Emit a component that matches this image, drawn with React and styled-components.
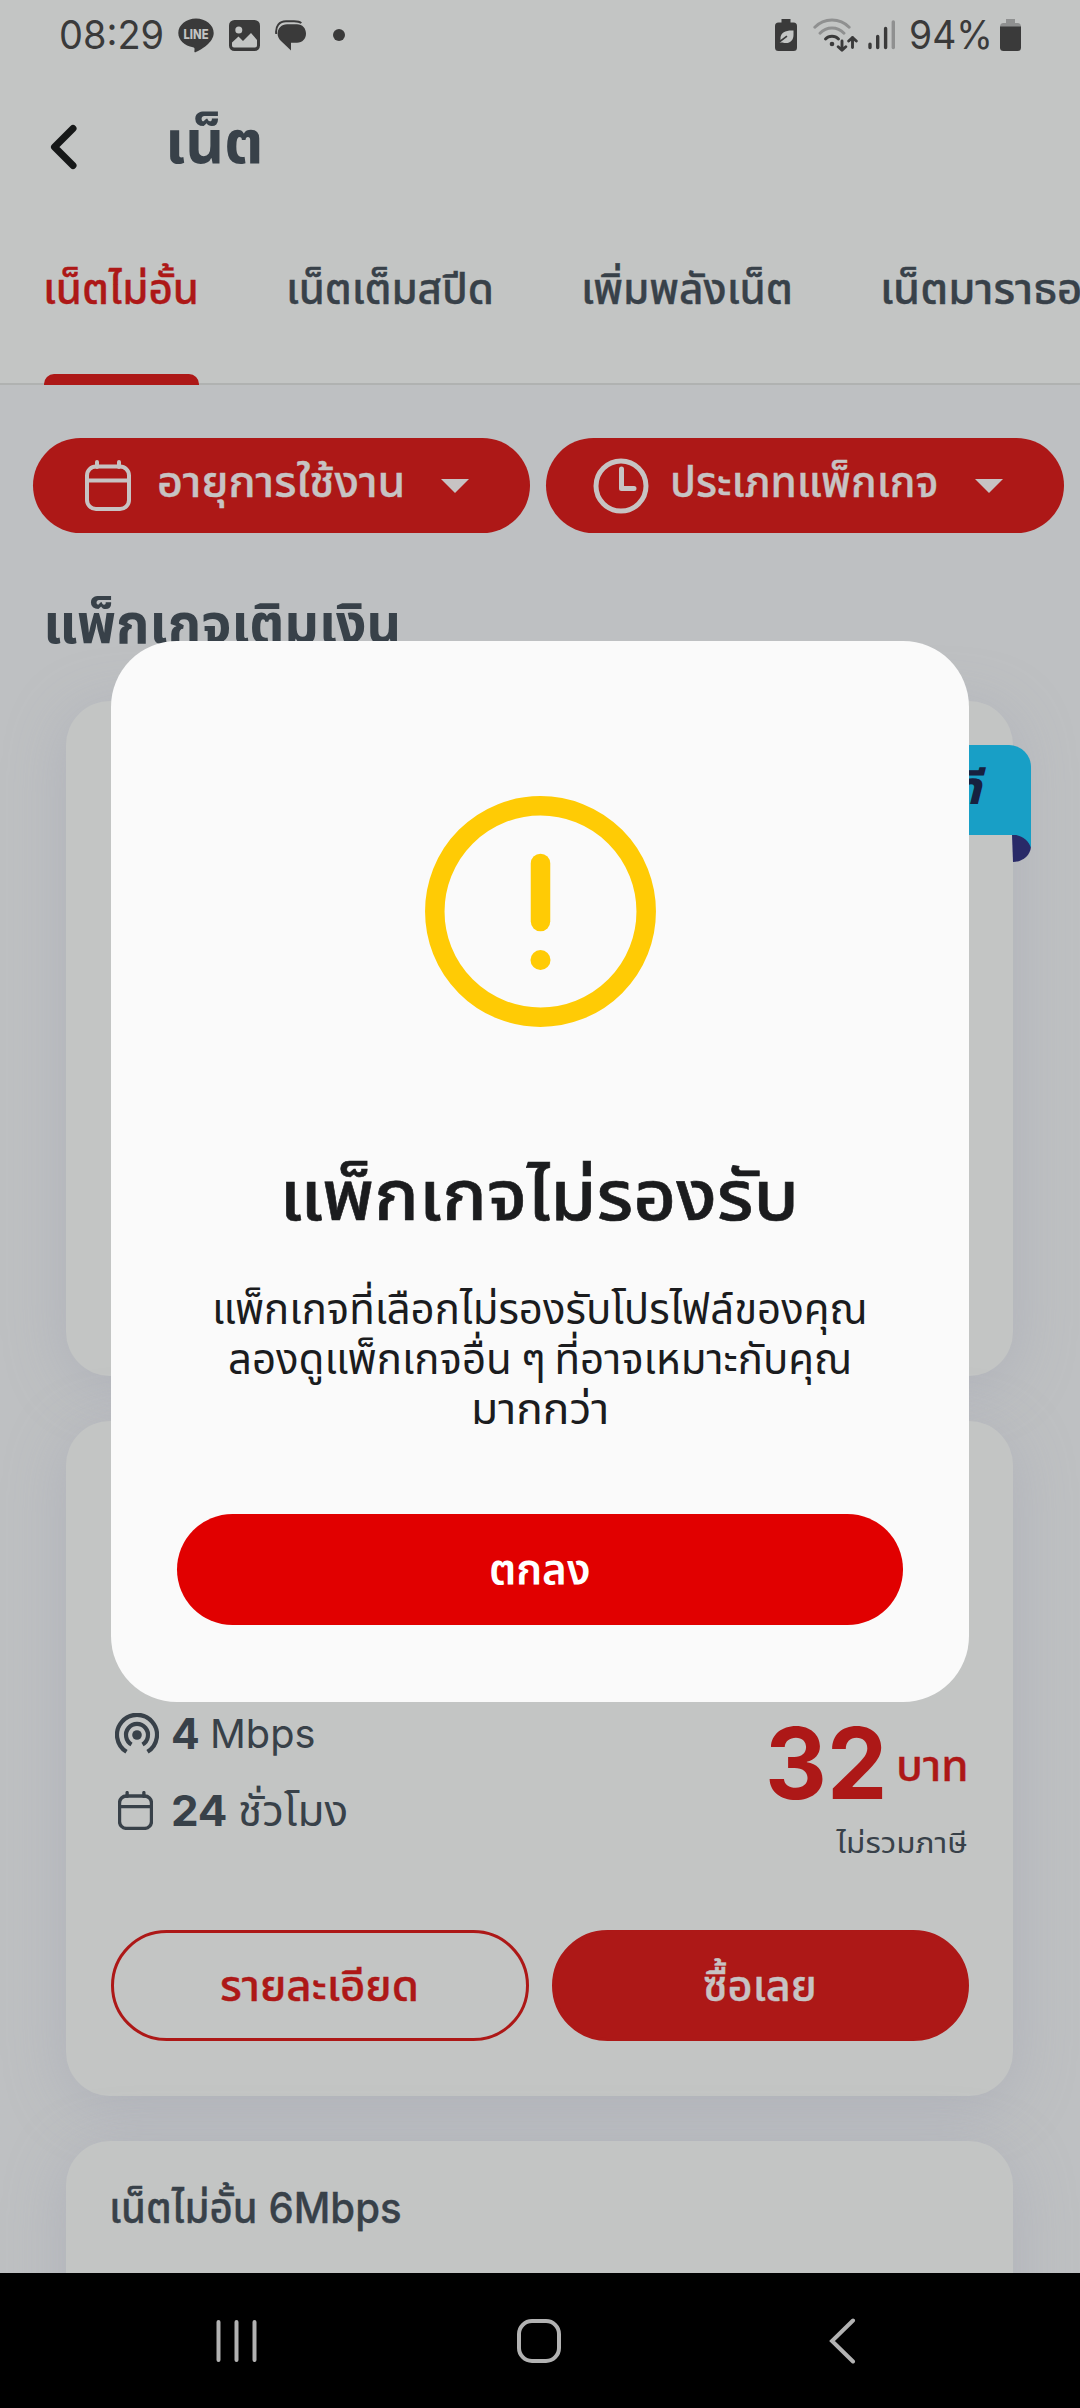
import React, { useLayoutEffect, useRef, useState } from 'react'
import styled, { createGlobalStyle } from 'styled-components';

// keeps the ink of a line at a fixed width whatever Thai font is installed
function FitText({ width, size, children, ...rest }) {
  const ref = useRef(null);
  const [scale, setScale] = useState(1);

  useLayoutEffect(() => {
    setScale((width + size * 0.08) / ref.current.offsetWidth);
  }, [width, size, children]);

  return (
    <TextBox $width={width} size={size} {...rest}>
      <TextLine ref={ref} style={{ transform: `translateX(${-size * 0.05}px) scaleX(${scale})` }}>{children}</TextLine>
    </TextBox>
  )
}

function CalendarIcon({ width, height, stroke }) {
  return (
    <svg width={width} height={height} viewBox="0 0 46 51" fill="none" stroke="currentColor" strokeWidth={stroke} strokeLinecap="round">
      <rect x="2" y="6.5" width="42" height="42.5" rx="9" />
      <path d="M2 20.5H44M12 2V7M34 2V7" />
    </svg>
  )
}

function ClockIcon() {
  return (
    <svg width="56" height="56" viewBox="0 0 56 56" fill="none" stroke="currentColor" strokeWidth="5" strokeLinecap="round" strokeLinejoin="round">
      <circle cx="28" cy="28" r="25" />
      <path d="M28.5 11V30.5H41" />
    </svg>
  )
}

function SignalIcon() {
  return (
    <svg width="44" height="41" viewBox="0 0 44 41" fill="none" stroke="currentColor" strokeWidth="4.2">
      <path d="M11.500 38.800A20 20 0 1 1 32.500 38.800" />
      <path d="M16.500 31.500A11 11 0 1 1 27.500 31.500" />
      <circle cx="22" cy="22" r="4.8" fill="currentColor" stroke="none" />
    </svg>
  )
}

function StatusIcons() {
  return (
    <StatusLeft>
      <FitText width={102} size={39} weight={380}>08:29</FitText>
      <svg width="36" height="35" viewBox="0 0 36 35" fill="#3a3a3a">
        <path d="M18 .5C8.2 .5 .3 7 .3 15c0 7.2 6.3 13 14.7 14.3 2 .4 1.6 1.5 1.4 3.6-.1 1 .3 1.8 1.6 1.2C23 31.8 35.7 24.5 35.7 15 35.7 7 27.8 .5 18 .5z" />
        <text x="5.5" y="20.5" fontFamily="Inter, sans-serif" fontSize="12.5" fontWeight="800" textLength="25" lengthAdjust="spacingAndGlyphs" fill="#c3c5c4">LINE</text>
      </svg>
      <svg width="31" height="31" viewBox="0 0 31 31">
        <rect width="31" height="31" rx="5.5" fill="#3a3a3a" />
        <circle cx="9.8" cy="10" r="3.5" fill="#c3c5c4" />
        <path d="M3 22.5L9.5 16.5 14 21 22 13 28 20V25.5Q28 27.5 26 27.5H5Q3 27.5 3 25.5z" fill="#c3c5c4" />
      </svg>
      <svg width="31" height="31" viewBox="0 0 31 31" fill="#3a3a3a">
        <path d="M12 4.2H22C27.5 4.2 31 8.3 31 13.5S27.5 22.8 22 22.8H16V30.5L6 21C3.5 18.8 2.6 16 2.6 13.5 2.6 8.3 6.5 4.2 12 4.2z" />
        <path d="M1.2 14C.2 6 4.5 1.2 11 1.2H19C22.5 1.2 25 1.8 26.3 3.2" fill="none" stroke="#3a3a3a" strokeWidth="1.9" />
      </svg>
      <Dot />
    </StatusLeft>
  )
}

function StatusSystem() {
  return (
    <StatusRight>
      <svg width="22" height="32" viewBox="0 0 22 32">
        <path d="M6.5 0H15.5V3.5H18.5Q22 3.5 22 7V28.5Q22 32 18.5 32H3.5Q0 32 0 28.5V7Q0 3.5 3.5 3.5H6.5z" fill="#3a3a3a" />
        <path d="M18.5 11.5C11 11 6 13.5 5.5 18.5V22L11.5 17.5 4 23.5H7.5C14 25.5 18.5 22 18.5 16z" fill="#c3c5c4" />
        <path d="M3.5 23.5L12 17.2" stroke="#3a3a3a" strokeWidth="1.6" />
      </svg>
      <svg width="45" height="34" viewBox="0 0 45 34" fill="none" strokeWidth="2.9" strokeLinecap="round" strokeLinejoin="round">
        <path d="M1.8 9.3C11-.5 27-.5 36.2 9.3M7 15.3C13.5 8.3 24.5 8.3 31 15.3" stroke="#8f9090" />
        <path d="M12.5 21C16 17.3 22 17.3 25.5 21" stroke="#3a3a3a" />
        <circle cx="19" cy="26" r="2.3" fill="#3a3a3a" stroke="none" />
        <path d="M29 23V32.3M25.2 28.8L29 32.3 32.8 28.8M39.5 29.5V19.5M35.7 23L39.5 19.5 43.3 23" stroke="#3a3a3a" />
      </svg>
      <svg width="28" height="30" viewBox="0 0 28 30" strokeWidth="3.4" strokeLinecap="round">
        <path d="M2 24.3V27.5M9.7 16.5V27.5M17.6 8.5V27.5" stroke="#3a3a3a" />
        <path d="M25.3 2V27.5" stroke="#8f9090" />
      </svg>
      <FitText width={81} size={39} weight={380}>94%</FitText>
      <svg width="21" height="32" viewBox="0 0 21 32">
        <path d="M6 0H15V4H17.5Q21 4 21 8H0Q0 4 3.5 4H6z" fill="#8f9090" />
        <path d="M0 7.5H21V28.5Q21 32 17.5 32H3.5Q0 32 0 28.5z" fill="#3a3a3a" />
      </svg>
    </StatusRight>
  )
}

function FilterButton({ icon, width, textWidth, children, ...rest }) {
  return (
    <Filter $width={width} {...rest}>
      {icon}
      <FitText width={textWidth} size={42} weight={500} lift={4}>{children}</FitText>
      <Caret />
    </Filter>
  )
}

function CardActions() {
  return (
    <Actions>
      <ActionButton $outline>
        <FitText width={196} size={42} weight={500}>รายละเอียด</FitText>
      </ActionButton>
      <ActionButton>
        <FitText width={111} size={42} weight={500}>ซื้อเลย</FitText>
      </ActionButton>
    </Actions>
  )
}

function WarningDialog() {
  return (
    <Backdrop>
      <Dialog>
        <svg width="231" height="231" viewBox="0 0 231 231" fill="none" stroke="#ffcb05" strokeWidth="19.5">
          <circle cx="115.5" cy="115.5" r="105.7" />
          <path d="M115.5 67.5V125.5" strokeLinecap="round" />
          <circle cx="115.5" cy="164" r="10" fill="#ffcb05" stroke="none" />
        </svg>
        <DialogTitle>
          <FitText width={514} size={69} weight={500} line={90}>แพ็กเกจไม่รองรับ</FitText>
        </DialogTitle>
        <DialogBody>
          <FitText width={652} size={42} line={50}>แพ็กเกจที่เลือกไม่รองรับโปรไฟล์ของคุณ</FitText>
          <FitText width={621} size={42} line={50}>ลองดูแพ็กเกจอื่น ๆ ที่อาจเหมาะกับคุณ</FitText>
          <FitText width={135} size={42} line={50}>มากกว่า</FitText>
        </DialogBody>
        <ConfirmButton>
          <FitText width={98} size={42} weight={600} lift={1}>ตกลง</FitText>
        </ConfirmButton>
      </Dialog>
    </Backdrop>
  )
}

function App() {
  return (
    <Screen>
      <GlobalStyle />
      <Header>
        <StatusBar>
          <StatusIcons />
          <StatusSystem />
        </StatusBar>
        <AppBar>
          <svg width="28" height="46" viewBox="0 0 28 46" fill="none" stroke="#161818" strokeWidth="7" strokeLinecap="round" strokeLinejoin="round">
            <path d="M23 4.5L4.5 23 23 41.5" />
          </svg>
          <FitText width={94} size={61} weight={700} lift={6}>เน็ต</FitText>
        </AppBar>
        <Tabs>
          <Tab $active><FitText width={153} size={42} weight={500}>เน็ตไม่อั้น</FitText></Tab>
          <Tab><FitText width={205} size={42} weight={500}>เน็ตเต็มสปีด</FitText></Tab>
          <Tab><FitText width={209} size={42} weight={500}>เพิ่มพลังเน็ต</FitText></Tab>
          <Tab><FitText width={226} size={42} weight={500}>เน็ตมาราธอน</FitText></Tab>
        </Tabs>
      </Header>
      <Content>
        <Filters>
          <FilterButton width={497} textWidth={245} icon={<CalendarIcon width={46} height={51} stroke={4} />}>อายุการใช้งาน</FilterButton>
          <FilterButton width={518} textWidth={265} icon={<ClockIcon />}>ประเภทแพ็กเกจ</FilterButton>
        </Filters>
        <SectionTitle>
          <FitText width={354} size={55} weight={700} line={70}>แพ็กเกจเติมเงิน</FitText>
        </SectionTitle>
        <CardList>
          <Card>
            <Ribbon>
              <RibbonText>ดี</RibbonText>
            </Ribbon>
            <RibbonFold viewBox="0 0 24 40">
              <path d="M-1 12H5C14 13 18 18 18 24 17 33 9 39 0 39z" fill="#292a68" />
              <path d="M-7 11C6 11 15 15 18 25V8H-7z" fill="#189fc6" />
            </RibbonFold>
            <CardActions />
          </Card>
          <Card>
            <PackageInfo>
              <div>
                <SpecRow>
                  <SpecIcon $left={4}><SignalIcon /></SpecIcon>
                  <FitText width={25} size={42} weight={700} line={77}>4</FitText>
                  <FitText width={102} size={40} line={77}>Mbps</FitText>
                </SpecRow>
                <SpecRow>
                  <SpecIcon $left={7}><CalendarIcon width={35} height={39} stroke={4.4} /></SpecIcon>
                  <FitText width={53} size={42} weight={700} line={77}>24</FitText>
                  <FitText width={107} size={42} line={77}>ชั่วโมง</FitText>
                </SpecRow>
              </div>
              <PriceColumn>
                <Price>
                  <FitText width={114} size={99} weight={700} line={100}>32</FitText>
                  <PriceUnit>
                    <FitText width={69} size={42} weight={500} line={50}>บาท</FitText>
                  </PriceUnit>
                </Price>
                <TaxNote>
                  <FitText width={129} size={29} line={40}>ไม่รวมภาษี</FitText>
                </TaxNote>
              </PriceColumn>
            </PackageInfo>
            <CardActions />
          </Card>
          <Card $open>
            <FitText width={289} size={42} weight={500} line={60}>เน็ตไม่อั้น 6Mbps</FitText>
          </Card>
        </CardList>
      </Content>
      <WarningDialog />
      <NavBar>
        <svg width="42" height="44" viewBox="0 0 42 44" stroke="#b2b2b2" strokeWidth="4" strokeLinecap="round">
          <path d="M2.5 3V41M20.5 3V41M38.5 3V41" />
        </svg>
        <svg width="44" height="44" viewBox="0 0 44 44" fill="none" stroke="#b2b2b2" strokeWidth="4">
          <rect x="2" y="2" width="40" height="40" rx="13" />
        </svg>
        <svg width="27" height="46" viewBox="0 0 27 46" fill="none" stroke="#b2b2b2" strokeWidth="4" strokeLinecap="round">
          <path d="M24 2.5L3 23 24 43.5" />
        </svg>
      </NavBar>
    </Screen>
  )
}
export default App


const GlobalStyle = createGlobalStyle`
  body {
    margin: 0;
    background: #000;
  }

  svg {
    display: block;
    flex-shrink: 0;
  }
`;

const Screen = styled.div`
  position: relative;
  display: flex;
  flex-direction: column;
  width: 1080px;
  height: 2408px;
  overflow: hidden;
  background: #bec0c2;
  color: #384149;
  font-family: Inter, "Noto Sans Thai", "Noto Sans", sans-serif;
`;

const TextBox = styled.span`
  display: block;
  flex-shrink: 0;
  width: ${props => props.$width}px;
  font-size: ${props => props.size}px;
  font-weight: ${props => props.weight || 400};
  line-height: ${props => props.line || 60}px;
  padding-bottom: ${props => (props.lift || 0) * 2}px;
  white-space: nowrap;
  -webkit-text-stroke: ${props => props.weight === 500 ? '0.009em' : '0'};
`;

const TextLine = styled.span`
  display: inline-block;
  vertical-align: top;
  transform-origin: left center;
`;

const Header = styled.header`
  height: 383px;
  border-bottom: 2px solid #b0b2b1;
  background: #c3c5c4;
`;

const StatusBar = styled.div`
  display: flex;
  justify-content: space-between;
  height: 70px;
  padding: 0 59px 0 61px;
  color: #3a3a3a;
`;

const StatusLeft = styled.div`
  display: flex;
  align-items: center;
  gap: 15px;
`;

const StatusRight = styled(StatusLeft)`
  gap: 10px;

  svg:nth-child(2) {
    margin-left: 6px;
  }

  span {
    margin-left: 5px;
  }

  span span {
    margin-left: 0;
  }

  svg:last-child {
    margin-left: -2px;
  }
`;

const Dot = styled.i`
  width: 12px;
  height: 12px;
  margin-left: 12px;
  border-radius: 50%;
  background: #3a3a3a;
`;

const AppBar = styled.div`
  display: flex;
  align-items: center;
  gap: 90px;
  height: 153px;
  padding-left: 50px;
`;

const Tabs = styled.nav`
  display: flex;
  gap: 90px;
  height: 162px;
  padding-left: 45px;
`;

const Tab = styled.div`
  display: flex;
  flex-direction: column;
  justify-content: space-between;
  flex-shrink: 0;
  padding-top: 36px;
  color: ${props => props.$active ? '#ad1817' : 'inherit'};

  &::after {
    content: "";
    height: 11px;
    margin: 0 -1px;
    border-radius: 10px 10px 0 0;
    background: ${props => props.$active ? '#ad1817' : 'transparent'};
  }
`;

const Content = styled.main`
  flex: 1;
  min-height: 0;
  overflow: hidden;
`;

const Filters = styled.div`
  display: flex;
  gap: 16px;
  padding: 53px 0 0 33px;
`;

const Filter = styled.div`
  display: flex;
  flex-shrink: 0;
  align-items: center;
  justify-content: space-between;
  box-sizing: border-box;
  width: ${props => props.$width}px;
  height: 95px;
  padding: 0 61px 0 ${props => props.$width > 500 ? 47 : 52}px;
  border-radius: 48px;
  background: #ad1817;
  color: #c7c3c3;

  > span {
    margin-right: ${props => props.$width > 500 ? 15 : 9}px;
  }
`;

const Caret = styled.i`
  border: 14px solid transparent;
  border-top-color: #c7c3c3;
  border-bottom: 0;
`;

const SectionTitle = styled.div`
  padding: 55px 0 43px 46px;
`;

const CardList = styled.div`
  display: flex;
  flex-direction: column;
  gap: 45px;
  padding: 0 67px 0 66px;
`;

const Card = styled.section`
  position: relative;
  display: flex;
  flex-direction: column;
  justify-content: ${props => props.$open ? 'flex-start' : 'flex-end'};
  box-sizing: border-box;
  height: 675px;
  flex-shrink: 0;
  padding: ${props => props.$open ? '37px' : '0'} 44px 55px 45px;
  border-radius: 44px;
  background: #c3c5c4;
  box-shadow: 0 10px 60px rgba(150, 152, 172, 0.36);
`;

const Ribbon = styled.div`
  position: absolute;
  top: 44px;
  right: -18px;
  display: flex;
  justify-content: flex-end;
  width: 200px;
  height: 90px;
  border-radius: 0 22px 0 0;
  background: #189fc6;
`;

const RibbonText = styled.span`
  padding-right: 50px;
  color: #17213f;
  font-size: 46px;
  font-style: italic;
  font-weight: 800;
  line-height: 84px;
`;

const RibbonFold = styled.svg`
  position: absolute;
  top: 122px;
  right: -24px;
  width: 24px;
  height: 40px;
  overflow: visible;
`;

const PackageInfo = styled.div`
  display: flex;
  justify-content: space-between;
  margin-bottom: 67px;
`;

const SpecRow = styled.div`
  display: flex;
  align-items: center;
  gap: 14px;
`;

const SpecIcon = styled.div`
  box-sizing: border-box;
  width: 48px;
  padding-left: ${props => props.$left}px;
`;

const PriceColumn = styled.div`
  display: flex;
  flex-direction: column;
  align-items: flex-end;
  padding: 18px 2px 0 0;
`;

const Price = styled.div`
  display: flex;
  gap: 14px;
  height: 100px;
  color: #ad1817;
`;

const PriceUnit = styled.div`
  padding-top: 28px;
`;

const TaxNote = styled.div`
  margin-top: 10px;
`;

const Actions = styled.div`
  display: flex;
  gap: 23px;
`;

const ActionButton = styled.div`
  display: flex;
  flex: 1;
  align-items: center;
  justify-content: center;
  box-sizing: border-box;
  height: 111px;
  border: 3px solid #ad1817;
  border-radius: 56px;
  background: ${props => props.$outline ? 'transparent' : '#ad1817'};
  color: ${props => props.$outline ? '#ad1817' : '#c7c3c3'};
`;

const Backdrop = styled.div`
  position: absolute;
  inset: 0;
  display: flex;
  justify-content: center;
  align-items: flex-start;
  padding-top: 641px;
`;

const Dialog = styled.div`
  display: flex;
  flex-direction: column;
  align-items: center;
  box-sizing: border-box;
  width: 858px;
  height: 1061px;
  padding-top: 155px;
  border-radius: 66px;
  background: #fafafa;
  color: #1b1c1e;
`;

const DialogTitle = styled.div`
  margin-top: 123px;
`;

const DialogBody = styled.div`
  display: flex;
  flex-direction: column;
  align-items: center;
  margin-top: 44px;
  word-spacing: -3px;
`;

const ConfirmButton = styled.div`
  display: flex;
  align-items: center;
  justify-content: center;
  width: 726px;
  height: 111px;
  margin-top: 80px;
  border-radius: 56px;
  background: #e10000;
  color: #fff;
`;

const NavBar = styled.footer`
  display: flex;
  align-items: center;
  box-sizing: border-box;
  height: 135px;
  padding-left: 216px;
  background: #000;

  svg + svg {
    margin-left: 259px;
  }

  svg:last-child {
    margin-left: 268px;
  }
`;
